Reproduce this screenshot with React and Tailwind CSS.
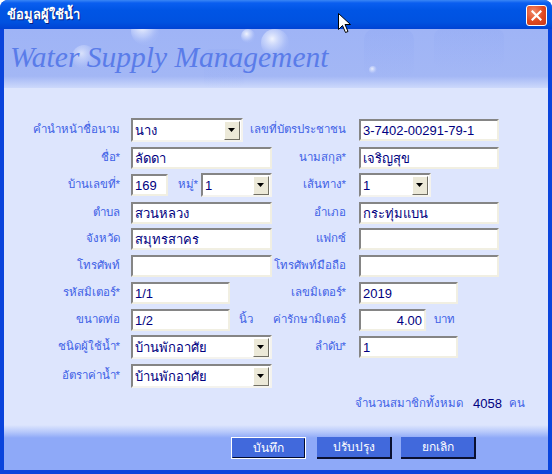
import React from 'react';

const FONT = '"Liberation Sans", "Noto Sans", Tahoma, sans-serif';

function Field({ w, value = '', right = false }) {
  return (
    <div
      className={`${w} h-[22px] shrink-0 bg-white border-2 border-t-[#858585] border-l-[#858585] border-b-[#f1efe2] border-r-[#f1efe2] flex items-center px-[2px] text-[13px] leading-none text-[#000080] whitespace-nowrap ${right ? 'justify-end' : ''}`}
    >
      {value}
    </div>
  );
}

function Combo({ w, value }) {
  return (
    <div
      className={`${w} h-[24px] shrink-0 bg-white border-2 border-t-[#858585] border-l-[#858585] border-b-[#f4f3ee] border-r-[#f4f3ee] flex items-center pl-[2px] text-[13px] leading-none text-[#000080] whitespace-nowrap`}
    >
      <span className="flex-1">{value}</span>
      <div className="w-[16px] h-[19px] bg-[#ece9d8] border border-t-white border-l-white border-b-[#716f64] border-r-[#716f64] flex items-center justify-center mr-[1px]">
        <svg width="8" height="5" viewBox="0 0 8 5">
          <path d="M0 0h7L3.5 4z" fill="#000" />
        </svg>
      </div>
    </div>
  );
}

function Label({ children, className = '' }) {
  return (
    <div className={`flex justify-end whitespace-nowrap text-[11.5px] text-[#3d5fe6] ${className}`}>
      {children}
    </div>
  );
}

export default function App() {
  return (
    <div
      className="relative w-[552px] h-[474px] overflow-hidden bg-[#0a44dc] rounded-t-[8px] flex flex-col"
      style={{ fontFamily: FONT }}
    >
      {/* title bar */}
      <div className="h-[29px] shrink-0 flex items-center justify-between pl-[7px] pr-[5px] bg-[linear-gradient(to_bottom,#3a86f5_0px,#0a5ef0_3px,#0055e5_10px,#0052e0_22px,#0043d4_29px)]">
        <span className="text-white font-bold text-[13px] [text-shadow:1px_1px_0_#0a1e80]">ข้อมูลผู้ใช้น้ำ</span>
        <div className="w-[21px] h-[21px] rounded-[3px] border border-white bg-[radial-gradient(circle_at_35%_30%,#f08a6a,#e0481f_55%,#c8381a)] flex items-center justify-center mt-[2px]">
          <svg width="11" height="11" viewBox="0 0 11 11">
            <path d="M1.5 1.5l8 8M9.5 1.5l-8 8" stroke="#fff" strokeWidth="2.2" strokeLinecap="square" />
          </svg>
        </div>
      </div>

      {/* client area */}
      <div className="flex-1 flex flex-col mx-[4px] mb-[4px] bg-[#dde5fd]">
        {/* header banner */}
        <div className="relative h-[59px] shrink-0 overflow-hidden bg-[linear-gradient(to_bottom,#9fb4f6_0%,#a3b7f5_80%,#cdd9fb_100%)] flex items-center pl-[6px]">
          <svg className="absolute inset-0" width="544" height="59" viewBox="0 0 544 59">
            <defs>
              <radialGradient id="bub" cx="40%" cy="35%" r="60%">
                <stop offset="0%" stopColor="#ffffff" stopOpacity="0.85" />
                <stop offset="60%" stopColor="#d6e0fd" stopOpacity="0.5" />
                <stop offset="100%" stopColor="#b8c8fa" stopOpacity="0.1" />
              </radialGradient>
              <linearGradient id="shade" x1="0" x2="0" y1="0" y2="1">
                <stop offset="0%" stopColor="#8ea6f3" stopOpacity="0.6" />
                <stop offset="100%" stopColor="#8ea6f3" stopOpacity="0" />
              </linearGradient>
            </defs>
            <circle cx="141" cy="2" r="14" fill="url(#bub)" />
            <circle cx="244" cy="7" r="7" fill="url(#bub)" />
            <circle cx="271" cy="14" r="14" fill="url(#bub)" />
            <circle cx="80" cy="28" r="12" fill="url(#bub)" opacity="0.7" />
            <circle cx="369" cy="41" r="4" fill="url(#bub)" />
            <rect x="360" y="0" width="50" height="50" rx="10" fill="url(#shade)" opacity="0.5" />
            <rect x="430" y="0" width="70" height="40" rx="8" fill="url(#shade)" opacity="0.4" />
            <rect x="200" y="20" width="40" height="39" rx="6" fill="url(#shade)" opacity="0.35" />
          </svg>
          <span className="relative italic text-[29.5px] text-[#5a7ce9] mt-[-3px]" style={{ fontFamily: '"Liberation Serif", serif' }}>
            Water Supply Management
          </span>
        </div>

        {/* form */}
        <div className="flex flex-col pt-[30px]">
          <div className="flex items-center h-[24px]">
            <Label className="w-[116px]">คำนำหน้าชื่อนาม</Label>
            <div className="w-[11px]" />
            <div className="w-[141px] flex"><Combo w="w-[112px]" value="นาง" /></div>
            <Label className="w-[74px]">เลขที่บัตรประชาชน</Label>
            <div className="w-[13px]" />
            <Field w="w-[140px]" value="3-7402-00291-79-1" />
          </div>

          <div className="flex items-center h-[24px] mt-[4px]">
            <Label className="w-[116px]">ชื่อ*</Label>
            <div className="w-[11px]" />
            <div className="w-[141px] flex"><Field w="w-[141px]" value="ลัดดา" /></div>
            <Label className="w-[74px]">นามสกุล*</Label>
            <div className="w-[13px]" />
            <Field w="w-[140px]" value="เจริญสุข" />
          </div>

          <div className="flex items-center h-[24px] mt-[3px]">
            <Label className="w-[116px]">บ้านเลขที่*</Label>
            <div className="w-[11px]" />
            <div className="w-[141px] flex items-center">
              <Field w="w-[37px]" value="169" />
              <Label className="w-[30px]">หมู่*</Label>
              <div className="w-[3px]" />
              <Combo w="w-[71px]" value="1" />
            </div>
            <Label className="w-[74px]">เส้นทาง*</Label>
            <div className="w-[13px]" />
            <Combo w="w-[72px]" value="1" />
          </div>

          <div className="flex items-center h-[24px] mt-[4px]">
            <Label className="w-[116px]">ตำบล</Label>
            <div className="w-[11px]" />
            <div className="w-[141px] flex"><Field w="w-[141px]" value="สวนหลวง" /></div>
            <Label className="w-[74px]">อำเภอ</Label>
            <div className="w-[13px]" />
            <Field w="w-[140px]" value="กระทุ่มแบน" />
          </div>

          <div className="flex items-center h-[24px] mt-[2px]">
            <Label className="w-[116px]">จังหวัด</Label>
            <div className="w-[11px]" />
            <div className="w-[141px] flex"><Field w="w-[141px]" value="สมุทรสาคร" /></div>
            <Label className="w-[74px]">แฟกซ์</Label>
            <div className="w-[13px]" />
            <Field w="w-[140px]" />
          </div>

          <div className="flex items-center h-[24px] mt-[3px]">
            <Label className="w-[116px]">โทรศัพท์</Label>
            <div className="w-[11px]" />
            <div className="w-[141px] flex"><Field w="w-[141px]" /></div>
            <Label className="w-[74px]">โทรศัพท์มือถือ</Label>
            <div className="w-[13px]" />
            <Field w="w-[140px]" />
          </div>

          <div className="flex items-center h-[24px] mt-[3px]">
            <Label className="w-[116px]">รหัสมิเตอร์*</Label>
            <div className="w-[11px]" />
            <div className="w-[141px] flex"><Field w="w-[99px]" value="1/1" /></div>
            <Label className="w-[74px]">เลขมิเตอร์*</Label>
            <div className="w-[13px]" />
            <Field w="w-[99px]" value="2019" />
          </div>

          <div className="flex items-center h-[24px] mt-[3px]">
            <Label className="w-[116px]">ขนาดท่อ</Label>
            <div className="w-[11px]" />
            <div className="w-[141px] flex items-center">
              <Field w="w-[99px]" value="1/2" />
              <span className="ml-[9px] text-[11.5px] text-[#3d5fe6]">นิ้ว</span>
            </div>
            <Label className="w-[74px]">ค่ารักษามิเตอร์</Label>
            <div className="w-[13px]" />
            <Field w="w-[67px]" value="4.00" right />
            <span className="ml-[8px] text-[11.5px] text-[#3d5fe6]">บาท</span>
          </div>

          <div className="flex items-center h-[24px] mt-[3px]">
            <Label className="w-[116px]">ชนิดผู้ใช้น้ำ*</Label>
            <div className="w-[11px]" />
            <div className="w-[141px] flex"><Combo w="w-[141px]" value="บ้านพักอาศัย" /></div>
            <Label className="w-[74px]">ลำดับ*</Label>
            <div className="w-[13px]" />
            <Field w="w-[99px]" value="1" />
          </div>

          <div className="flex items-center h-[24px] mt-[5px]">
            <Label className="w-[116px]">อัตราค่าน้ำ*</Label>
            <div className="w-[11px]" />
            <div className="w-[141px] flex"><Combo w="w-[141px]" value="บ้านพักอาศัย" /></div>
          </div>

          <div className="flex justify-end items-center h-[16px] mt-[8px] pr-[23px] text-[11.5px] whitespace-nowrap">
            <span className="text-[#3d5fe6]">จำนวนสมาชิกทั้งหมด</span>
            <span className="ml-[10px] text-[13px] text-[#000080]">4058</span>
            <span className="ml-[7px] text-[#3d5fe6]">คน</span>
          </div>
        </div>

        {/* bottom band with buttons */}
        <div className="mt-auto h-[45px] flex justify-start pl-[227px] pt-[12px] bg-[linear-gradient(to_bottom,#dde5fd_0px,#b6c8fb_7px,#8ea9f8_13px,#8ea9f8_100%)]">
          <button className="w-[75px] h-[22px] border border-white p-0 bg-transparent">
            <div className="w-full h-full bg-[#4169dc] border border-t-[#4169dc] border-l-[#4169dc] border-b-[#000a30] border-r-[#000a30] flex items-center justify-center text-white text-[12px]">
              บันทึก
            </div>
          </button>
          <button className="ml-[11px] w-[75px] h-[22px] bg-[#4169dc] border-b-2 border-r-2 border-t-0 border-l-0 border-[#0a1030] flex items-center justify-center text-white text-[12px]">
            ปรับปรุง
          </button>
          <button className="ml-[9px] w-[75px] h-[22px] bg-[#4169dc] border-b-2 border-r-2 border-t-0 border-l-0 border-[#0a1030] flex items-center justify-center text-white text-[12px]">
            ยกเลิก
          </button>
        </div>
      </div>

      {/* mouse pointer */}
      <svg className="absolute left-[338px] top-[13px]" width="13" height="21" viewBox="0 0 13 21">
        <path d="M0.5 0.5v16l4-4 3 7 2.5-1-3-7h5.5z" fill="#fff" stroke="#000" strokeWidth="1" />
      </svg>
    </div>
  );
}
